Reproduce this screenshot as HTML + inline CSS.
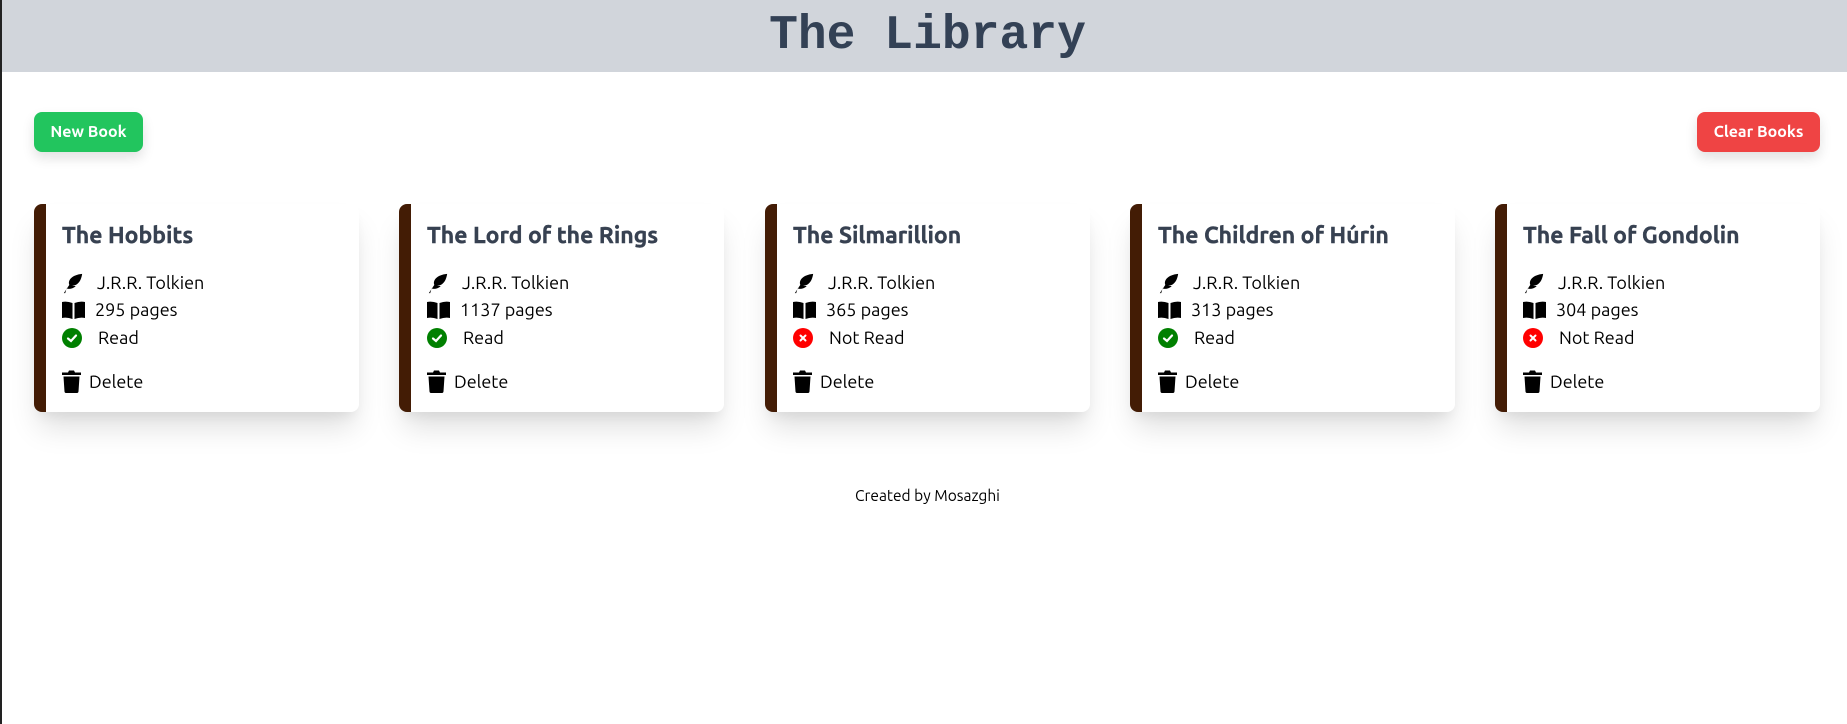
<!DOCTYPE html>
<html><head><meta charset="utf-8"><style>
*{box-sizing:border-box;margin:0;padding:0}
body{width:1847px;height:724px;background:#fff;font-family:"Ubuntu","Liberation Sans",sans-serif;position:relative;overflow:hidden}
.edge{position:absolute;left:0;top:0;width:2px;height:724px;background:#222}
header{height:72px;background:#d1d5db;text-align:center}
header h1{font-family:"Liberation Mono",monospace;font-weight:bold;font-size:48px;color:#334155;line-height:72px;padding-left:8px}
.btn{position:absolute;top:112px;height:40px;border-radius:8px;color:#fff;font-weight:700;font-size:16px;line-height:40px;text-align:center;box-shadow:0 6px 12px rgba(0,0,0,.12)}
.new{left:34px;width:109px;background:#22c55e}
.clear{left:1697px;width:123px;background:#ef4444}
.card{position:absolute;top:204px;width:325px;height:208px;background:#fff;border-left:12px solid #431c05;border-radius:8px;box-shadow:0 20px 30px -5px rgba(0,0,0,.13),0 8px 12px -4px rgba(0,0,0,.06)}
.card h2{position:absolute;left:16px;top:19px;font-size:23px;font-weight:700;color:#374151;white-space:nowrap;-webkit-text-stroke:0.4px #374151}
.row{position:absolute;left:16px;font-size:18px;color:#000;display:flex;align-items:center;white-space:nowrap}
.row svg{display:block}
footer{position:absolute;top:487px;left:4px;width:1847px;text-align:center;font-size:15.5px;color:#000}
</style></head><body>
<div class="edge"></div>
<header><h1>The Library</h1></header>
<div class="btn new">New Book</div>
<div class="btn clear">Clear Books</div>

<div class="card" style="left:34px"><h2>The Hobbits</h2>
<div class="row" style="top:68px"><svg width="22" height="22" viewBox="0 0 24 24"><path d="M2 23 L8 14 C6 9 11 3 22 2 C21 9 18 13 14 14.5 L11 14.5 L15 15.5 C12 18 8 19 5 18 L3.5 23Z" fill="#000"/></svg><span style="margin-left:13px">J.R.R. Tolkien</span></div>
<div class="row" style="top:96px"><svg width="23" height="18" viewBox="0 0 23 18"><path d="M0 1 Q5 0 10.5 2 V18 Q5 16 0 17Z M12.5 2 Q18 0 23 1 V17 Q18 16 12.5 18Z" fill="#000"/></svg><span style="margin-left:10px">295 pages</span></div>
<div class="row" style="top:124px"><svg width="20" height="20" viewBox="0 0 20 20"><circle cx="10" cy="10" r="10" fill="#008000"/><path d="M6 10.5 L9 13 L14 7.5" stroke="#fff" stroke-width="2.2" fill="none" stroke-linecap="round"/></svg><span style="margin-left:16px">Read</span></div>
<div class="row" style="top:166px"><svg width="19" height="23" viewBox="0 0 19 23"><path d="M0 2.5 H6 L7 0.5 H12 L13 2.5 H19 V5 H0Z M1.5 6.5 H17.5 L16.5 21.5 Q16.3 23 15 23 H4 Q2.7 23 2.5 21.5Z" fill="#000"/></svg><span style="margin-left:8px">Delete</span></div>
</div>

<div class="card" style="left:399px"><h2>The Lord of the Rings</h2>
<div class="row" style="top:68px"><svg width="22" height="22" viewBox="0 0 24 24"><path d="M2 23 L8 14 C6 9 11 3 22 2 C21 9 18 13 14 14.5 L11 14.5 L15 15.5 C12 18 8 19 5 18 L3.5 23Z" fill="#000"/></svg><span style="margin-left:13px">J.R.R. Tolkien</span></div>
<div class="row" style="top:96px"><svg width="23" height="18" viewBox="0 0 23 18"><path d="M0 1 Q5 0 10.5 2 V18 Q5 16 0 17Z M12.5 2 Q18 0 23 1 V17 Q18 16 12.5 18Z" fill="#000"/></svg><span style="margin-left:10px">1137 pages</span></div>
<div class="row" style="top:124px"><svg width="20" height="20" viewBox="0 0 20 20"><circle cx="10" cy="10" r="10" fill="#008000"/><path d="M6 10.5 L9 13 L14 7.5" stroke="#fff" stroke-width="2.2" fill="none" stroke-linecap="round"/></svg><span style="margin-left:16px">Read</span></div>
<div class="row" style="top:166px"><svg width="19" height="23" viewBox="0 0 19 23"><path d="M0 2.5 H6 L7 0.5 H12 L13 2.5 H19 V5 H0Z M1.5 6.5 H17.5 L16.5 21.5 Q16.3 23 15 23 H4 Q2.7 23 2.5 21.5Z" fill="#000"/></svg><span style="margin-left:8px">Delete</span></div>
</div>

<div class="card" style="left:765px"><h2>The Silmarillion</h2>
<div class="row" style="top:68px"><svg width="22" height="22" viewBox="0 0 24 24"><path d="M2 23 L8 14 C6 9 11 3 22 2 C21 9 18 13 14 14.5 L11 14.5 L15 15.5 C12 18 8 19 5 18 L3.5 23Z" fill="#000"/></svg><span style="margin-left:13px">J.R.R. Tolkien</span></div>
<div class="row" style="top:96px"><svg width="23" height="18" viewBox="0 0 23 18"><path d="M0 1 Q5 0 10.5 2 V18 Q5 16 0 17Z M12.5 2 Q18 0 23 1 V17 Q18 16 12.5 18Z" fill="#000"/></svg><span style="margin-left:10px">365 pages</span></div>
<div class="row" style="top:124px"><svg width="20" height="20" viewBox="0 0 20 20"><circle cx="10" cy="10" r="10" fill="#f00"/><path d="M7.5 7.5 L12.5 12.5 M12.5 7.5 L7.5 12.5" stroke="#fff" stroke-width="2" stroke-linecap="round"/></svg><span style="margin-left:16px">Not Read</span></div>
<div class="row" style="top:166px"><svg width="19" height="23" viewBox="0 0 19 23"><path d="M0 2.5 H6 L7 0.5 H12 L13 2.5 H19 V5 H0Z M1.5 6.5 H17.5 L16.5 21.5 Q16.3 23 15 23 H4 Q2.7 23 2.5 21.5Z" fill="#000"/></svg><span style="margin-left:8px">Delete</span></div>
</div>

<div class="card" style="left:1130px"><h2>The Children of Húrin</h2>
<div class="row" style="top:68px"><svg width="22" height="22" viewBox="0 0 24 24"><path d="M2 23 L8 14 C6 9 11 3 22 2 C21 9 18 13 14 14.5 L11 14.5 L15 15.5 C12 18 8 19 5 18 L3.5 23Z" fill="#000"/></svg><span style="margin-left:13px">J.R.R. Tolkien</span></div>
<div class="row" style="top:96px"><svg width="23" height="18" viewBox="0 0 23 18"><path d="M0 1 Q5 0 10.5 2 V18 Q5 16 0 17Z M12.5 2 Q18 0 23 1 V17 Q18 16 12.5 18Z" fill="#000"/></svg><span style="margin-left:10px">313 pages</span></div>
<div class="row" style="top:124px"><svg width="20" height="20" viewBox="0 0 20 20"><circle cx="10" cy="10" r="10" fill="#008000"/><path d="M6 10.5 L9 13 L14 7.5" stroke="#fff" stroke-width="2.2" fill="none" stroke-linecap="round"/></svg><span style="margin-left:16px">Read</span></div>
<div class="row" style="top:166px"><svg width="19" height="23" viewBox="0 0 19 23"><path d="M0 2.5 H6 L7 0.5 H12 L13 2.5 H19 V5 H0Z M1.5 6.5 H17.5 L16.5 21.5 Q16.3 23 15 23 H4 Q2.7 23 2.5 21.5Z" fill="#000"/></svg><span style="margin-left:8px">Delete</span></div>
</div>

<div class="card" style="left:1495px"><h2>The Fall of Gondolin</h2>
<div class="row" style="top:68px"><svg width="22" height="22" viewBox="0 0 24 24"><path d="M2 23 L8 14 C6 9 11 3 22 2 C21 9 18 13 14 14.5 L11 14.5 L15 15.5 C12 18 8 19 5 18 L3.5 23Z" fill="#000"/></svg><span style="margin-left:13px">J.R.R. Tolkien</span></div>
<div class="row" style="top:96px"><svg width="23" height="18" viewBox="0 0 23 18"><path d="M0 1 Q5 0 10.5 2 V18 Q5 16 0 17Z M12.5 2 Q18 0 23 1 V17 Q18 16 12.5 18Z" fill="#000"/></svg><span style="margin-left:10px">304 pages</span></div>
<div class="row" style="top:124px"><svg width="20" height="20" viewBox="0 0 20 20"><circle cx="10" cy="10" r="10" fill="#f00"/><path d="M7.5 7.5 L12.5 12.5 M12.5 7.5 L7.5 12.5" stroke="#fff" stroke-width="2" stroke-linecap="round"/></svg><span style="margin-left:16px">Not Read</span></div>
<div class="row" style="top:166px"><svg width="19" height="23" viewBox="0 0 19 23"><path d="M0 2.5 H6 L7 0.5 H12 L13 2.5 H19 V5 H0Z M1.5 6.5 H17.5 L16.5 21.5 Q16.3 23 15 23 H4 Q2.7 23 2.5 21.5Z" fill="#000"/></svg><span style="margin-left:8px">Delete</span></div>
</div>

<footer>Created by Mosazghi</footer>
</body></html>
